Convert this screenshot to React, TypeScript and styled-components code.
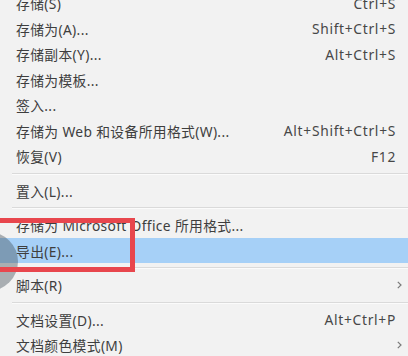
import React from 'react';
import styled, { createGlobalStyle } from 'styled-components';

const GlobalStyle = createGlobalStyle`
  html, body {
    margin: 0;
    padding: 0;
    background: #f2f2f2;
  }
`;

type Entry =
  | { kind: 'item'; label: string; shortcut?: string; sub?: boolean; active?: boolean }
  | { kind: 'sep' };

const entries: Entry[] = [
  { kind: 'item', label: '存储(S)', shortcut: 'Ctrl+S' },
  { kind: 'item', label: '存储为(A)...', shortcut: 'Shift+Ctrl+S' },
  { kind: 'item', label: '存储副本(Y)...', shortcut: 'Alt+Ctrl+S' },
  { kind: 'item', label: '存储为模板...' },
  { kind: 'item', label: '签入...' },
  { kind: 'item', label: '存储为 Web 和设备所用格式(W)...', shortcut: 'Alt+Shift+Ctrl+S' },
  { kind: 'item', label: '恢复(V)', shortcut: 'F12' },
  { kind: 'sep' },
  { kind: 'item', label: '置入(L)...' },
  { kind: 'sep' },
  { kind: 'item', label: '存储为 Microsoft Office 所用格式...' },
  { kind: 'item', label: '导出(E)...', active: true },
  { kind: 'sep' },
  { kind: 'item', label: '脚本(R)', sub: true },
  { kind: 'sep' },
  { kind: 'item', label: '文档设置(D)...', shortcut: 'Alt+Ctrl+P' },
  { kind: 'item', label: '文档颜色模式(M)', sub: true },
];

const App: React.FC = () => {
  return (
    <>
      <GlobalStyle />
      <Screen>
        <Menu>
          {entries.map((e, i) =>
            e.kind === 'sep' ? (
              <Separator key={i} />
            ) : (
              <Item key={i} $active={e.active}>
                <Label>{e.label}</Label>
                {e.shortcut && <Shortcut>{e.shortcut}</Shortcut>}
                {e.sub && (
                  <Chevron width="5" height="8" viewBox="0 0 5 8">
                    <polyline points="0.8,0.8 4,4 0.8,7.2" fill="none" stroke="#7a7a7a" strokeWidth="1.2" />
                  </Chevron>
                )}
              </Item>
            )
          )}
        </Menu>
        <Touch />
        <Highlight />
      </Screen>
    </>
  );
};

const Screen = styled.div`
  position: relative;
  width: 408px;
  height: 356px;
  overflow: hidden;
  background: #f2f2f2;
  font-family: 'Noto Sans', 'Noto Sans CJK SC', sans-serif;
`;

const Menu = styled.ul`
  list-style: none;
  margin: -9.75px 0 0;
  padding: 0;
  display: flex;
  flex-direction: column;
`;

const Item = styled.li<{ $active?: boolean }>`
  height: 25.5px;
  display: flex;
  align-items: center;
  padding: 0 4px 0 16px;
  background: ${(p) => (p.$active ? '#a6d0f7' : 'transparent')};
  color: #3e3e3e;
  font-size: 13.8px;
`;

const Label = styled.span`
  flex: 1;
  white-space: nowrap;
  letter-spacing: 0.35px;
`;

const Shortcut = styled.span`
  margin-right: 8px;
  color: #474747;
  white-space: nowrap;
  letter-spacing: 0.7px;
`;

const Chevron = styled.svg`
  margin-right: 2px;
  display: block;
`;

const Separator = styled.li`
  height: 9px;
  display: flex;
  align-items: center;
  padding-left: 12px;

  &::after {
    content: '';
    flex: 1;
    height: 1px;
    background: #dadada;
    box-shadow: 0 1px 0 #fbfbfb;
  }
`;

const Touch = styled.div`
  position: absolute;
  left: -41px;
  top: 232px;
  width: 59px;
  height: 59px;
  border-radius: 50%;
  background: rgba(70, 80, 90, 0.42);
`;

const Highlight = styled.div`
  position: absolute;
  left: -10px;
  top: 218px;
  width: 135px;
  height: 44px;
  border: 5px solid #e8464d;
`;

export default App;
